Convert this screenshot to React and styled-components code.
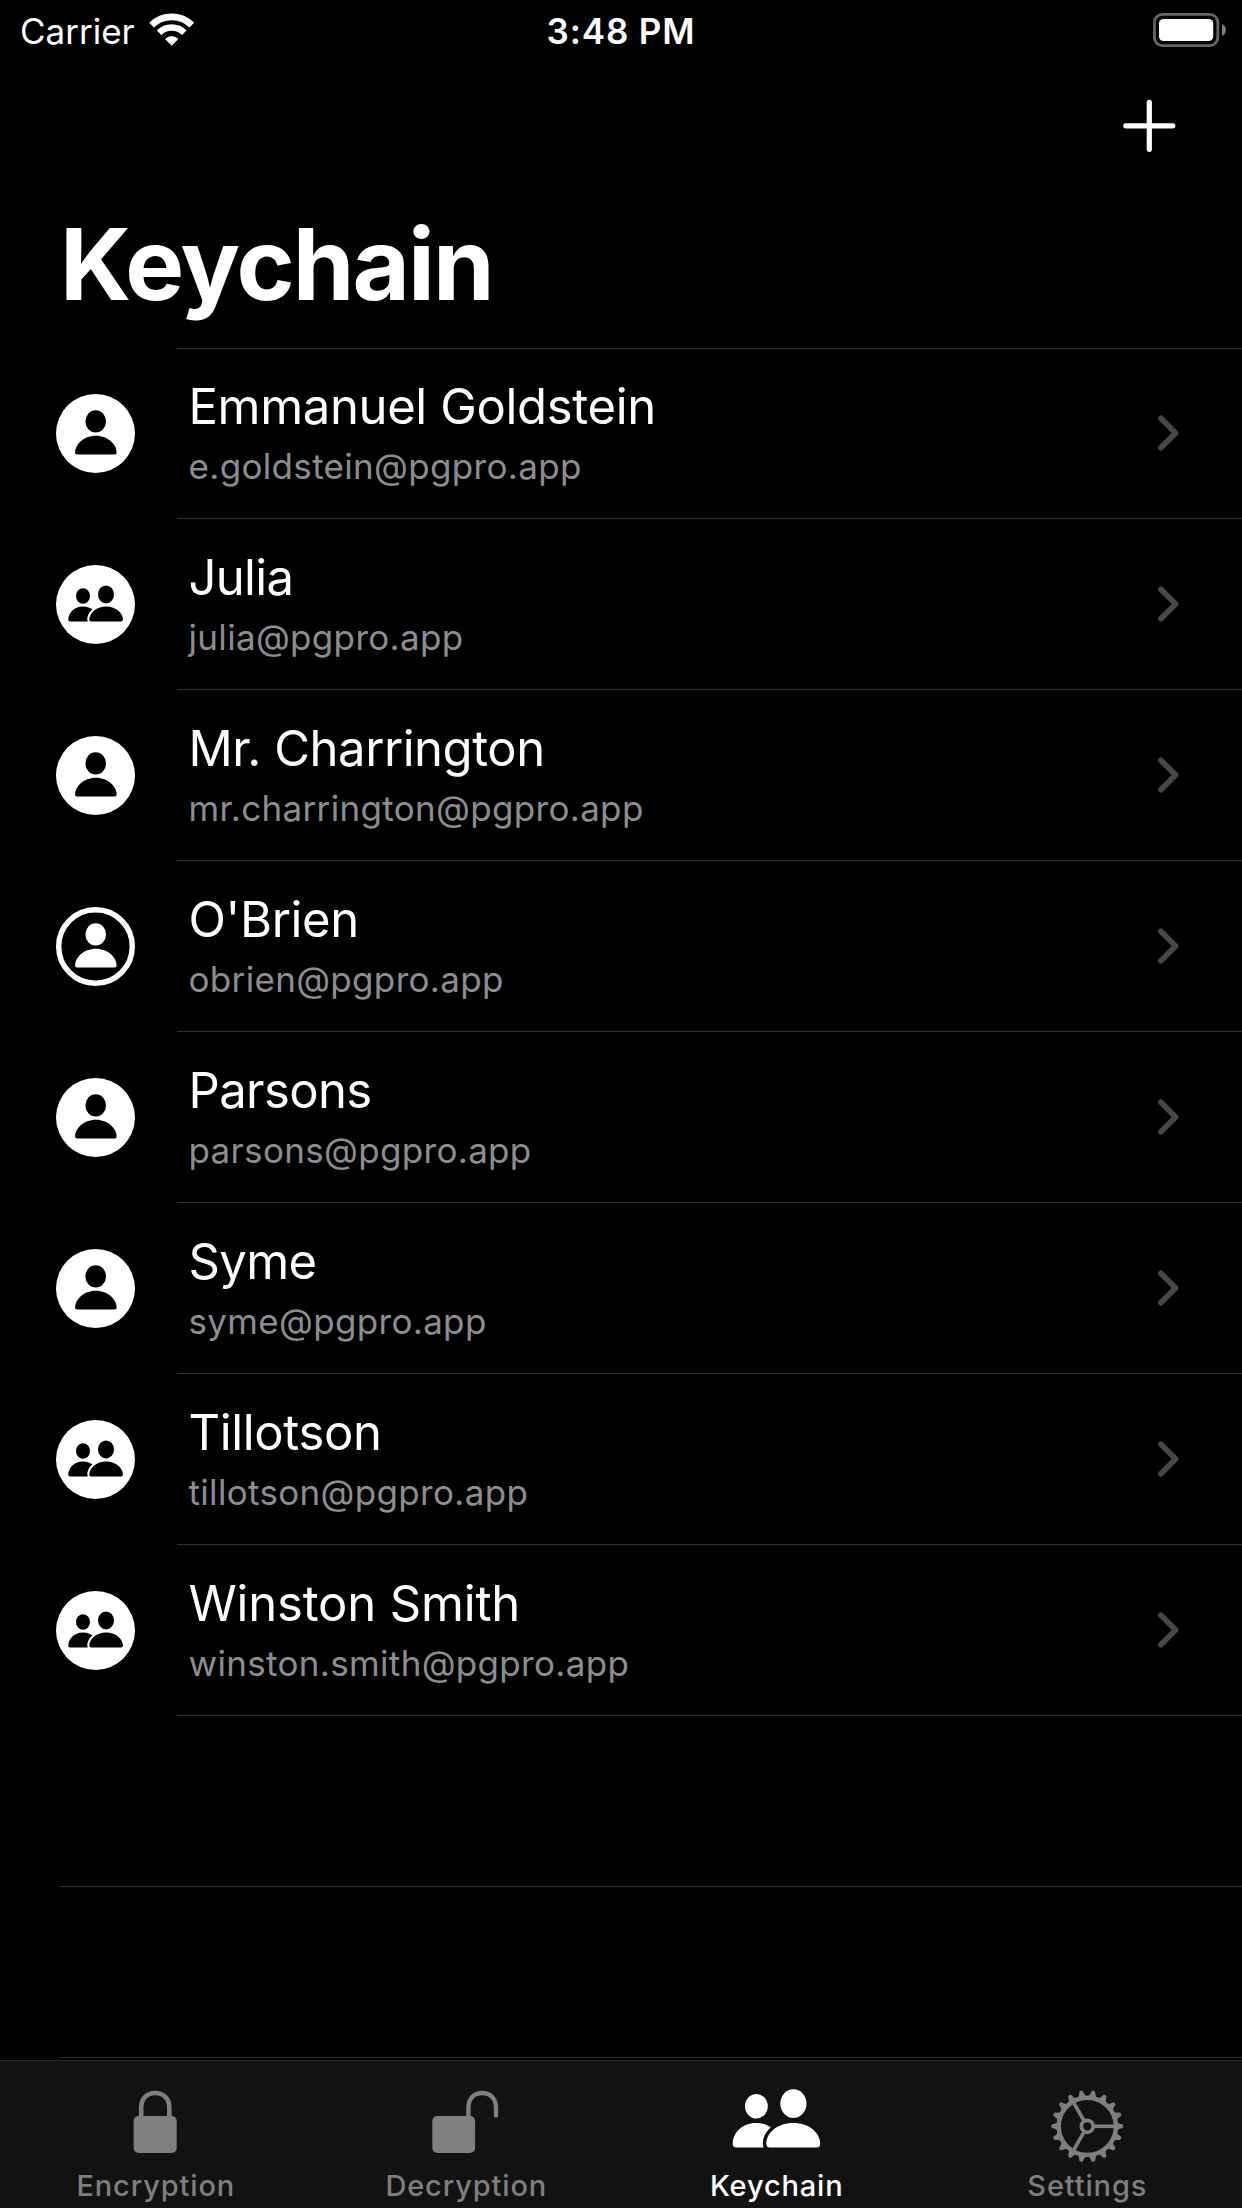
import React from "react";
import styled, { createGlobalStyle } from "styled-components";

const GlobalStyle = createGlobalStyle`
  body {
    margin: 0;
    background: #000;
    color: #fff;
    font-family: "Inter", "Liberation Sans", sans-serif;
  }
  *, *::before, *::after { box-sizing: border-box; }
  svg { display: block; flex: none; }
`;

const Screen = styled.div`
  width: 1242px;
  height: 2208px;
  display: flex;
  flex-direction: column;
  overflow: hidden;
  background: #000;
`;

const StatusBar = styled.header`
  flex: none;
  display: grid;
  grid-template-columns: 1fr auto 1fr;
  height: 60px;
  padding: 10px 15px 0 20px;
  font-size: 35px;
  line-height: 42px;
`;

const Carrier = styled.div`
  display: flex;
  align-items: flex-start;
  gap: 14.6px;

  svg { margin-top: 3px; }
`;

const Clock = styled.div`
  padding-right: 5px;
  font-weight: 600;
  letter-spacing: 0.85px;
`;

const BatteryArea = styled.div`
  display: flex;
  justify-content: flex-end;
  padding-top: 3px;
`;

const NavBar = styled.nav`
  flex: none;
  display: flex;
  align-items: center;
  justify-content: flex-end;
  height: 132px;
  padding-right: 66px;
`;

const IconButton = styled.button`
  padding: 0;
  border: 0;
  background: none;
  color: #fff;
`;

const Title = styled.h1`
  flex: none;
  margin: 12px 0 24px 60px;
  font-size: 99px;
  font-weight: 700;
  line-height: 120px;
  letter-spacing: -1.93px;
`;

const List = styled.ul`
  flex: 1;
  min-height: 0;
  margin: 0;
  padding: 0;
  overflow: hidden;
  list-style: none;
`;

const TopRule = styled.li`
  height: 1px;
  margin-left: 177px;
  background: #313134;
`;

const Row = styled.li`
  display: flex;
  height: ${(p) => (p.$first ? 170 : 171)}px;
`;

const AvatarCell = styled.div`
  flex: none;
  display: flex;
  align-items: flex-end;
  width: 177px;
  padding: 0 0 46px 56px;
`;

const RowBody = styled.div`
  flex: 1;
  display: flex;
  align-items: flex-end;
  justify-content: space-between;
  padding: 0 62px 31px 11.5px;
  border-bottom: 1px solid #313134;

  & > svg { margin-bottom: 35px; }
`;

const Labels = styled.div`
  display: flex;
  flex-direction: column;
  gap: 9px;
`;

const Name = styled.div`
  font-size: 49px;
  line-height: 59px;
  letter-spacing: ${(p) => p.$tracking ?? -0.35}px;
`;

const Email = styled.div`
  color: #8d8d92;
  font-size: 35px;
  line-height: 42px;
  letter-spacing: 0.33px;
`;

const EmptyRow = styled.li`
  height: 171px;
  margin-left: 60px;
  border-bottom: 1px solid #313134;
`;

const TabBar = styled.footer`
  flex: none;
  display: grid;
  grid-template-columns: repeat(4, 1fr);
  height: 148px;
  border-top: 1px solid #292929;
  background: #121212;
`;

const Tab = styled.div`
  display: flex;
  flex-direction: column;
  align-items: center;
  padding-top: 19px;
  color: ${(p) => (p.$active ? "#fff" : "#7f7f7f")};
`;

const TabLabel = styled.span`
  padding-left: 1px;
  font-size: 29px;
  font-weight: 500;
  line-height: 35px;
  letter-spacing: 0.85px;
`;

const BODY =
  "M19.1 58.2C19.1 51 27.4 41.8 39.8 41.8S60.6 51 60.6 58.2C60.6 59.8 60 60.4 58.5 60.4H21.2C19.7 60.4 19.1 59.8 19.1 58.2Z";

function Wifi() {
  return (
    <svg width="46" height="34" viewBox="0 0 46 34" fill="none" stroke="#fff">
      <path d="M2.6 12.1A28.7 28.7 0 0 1 42.8 12.1" strokeWidth="6.8" />
      <path d="M10 19.6A18.2 18.2 0 0 1 35.4 19.6" strokeWidth="6.4" />
      <path d="M22.7 32.2L16.6 26.1A8.8 8.8 0 0 1 28.8 26.1Z" fill="#fff" strokeWidth="1" strokeLinejoin="round" />
    </svg>
  );
}

function Battery() {
  return (
    <svg width="74" height="34" viewBox="0 0 74 34">
      <rect x="1.4" y="1.4" width="63.4" height="31.2" rx="8" fill="none" stroke="#666" strokeWidth="2.8" />
      <rect x="6" y="6" width="54.2" height="22" rx="4.5" fill="#fff" />
      <path d="M69 11C71.3 12 72.8 14.3 72.8 17S71.3 22 69 23Z" fill="#808080" />
    </svg>
  );
}

function Plus() {
  return (
    <svg width="54" height="54" viewBox="0 0 54 54" stroke="currentColor" strokeWidth="5.2" strokeLinecap="round">
      <path d="M27.3 3.3V50.3M3.8 26.8H50.8" />
    </svg>
  );
}

function Person({ fill }) {
  return (
    <g fill={fill}>
      <ellipse cx="39.7" cy="27.4" rx="10.3" ry="11.2" />
      <path d={BODY} />
    </g>
  );
}

function Pair() {
  return (
    <g fill="#000">
      <ellipse cx="27" cy="31" rx="7" ry="7.7" />
      <path d="M12.3 54.3C12.3 48.5 17.5 41.4 27 41.4S41.7 48.5 41.7 54.3V56.4H14.2C12.8 56.4 12.3 55.8 12.3 54.3Z" />
      <ellipse cx="50" cy="29.4" rx="8" ry="9" />
      <path
        d="M33.3 54.3C33.3 48.5 39.8 41.4 50.1 41.4S66.9 48.5 66.9 54.3C66.9 55.8 66.4 56.4 65 56.4H35.2C33.8 56.4 33.3 55.8 33.3 54.3Z"
        stroke="#fff"
        strokeWidth="4"
        paintOrder="stroke"
      />
    </g>
  );
}

function Avatar({ kind }) {
  return (
    <svg width="79" height="79" viewBox="0 0 79 79">
      {kind === "public" ? (
        <circle cx="39.5" cy="39.5" r="36.8" fill="none" stroke="#fff" strokeWidth="5.4" />
      ) : (
        <circle cx="39.5" cy="39.5" r="39.5" fill="#fff" />
      )}
      {kind === "pair" ? <Pair /> : <Person fill={kind === "public" ? "#fff" : "#000"} />}
    </svg>
  );
}

function Chevron() {
  return (
    <svg width="24" height="38" viewBox="0 0 24 38" fill="none" stroke="#48484b" strokeWidth="5.6" strokeLinecap="round" strokeLinejoin="round">
      <path d="M4.9 4.2L19.6 19L4.9 33.8" />
    </svg>
  );
}

function TabIcon({ children }) {
  return (
    <svg width="90" height="88" viewBox="0 0 90 88">
      {children}
    </svg>
  );
}

function Lock() {
  return (
    <TabIcon>
      <rect x="23.6" y="36" width="43.1" height="37" rx="5" fill="currentColor" />
      <path d="M31.2 38V27.5C31.2 18.7 37 13 45.2 13S59.3 18.7 59.3 27.5V38" fill="none" stroke="currentColor" strokeWidth="4.6" />
    </TabIcon>
  );
}

function Unlock() {
  return (
    <TabIcon>
      <rect x="11.3" y="36" width="42.8" height="37" rx="5" fill="currentColor" />
      <path d="M47.4 38V27.5C47.4 18.7 53 13 61.2 13S75 18.7 75 27.5V35.4" fill="none" stroke="currentColor" strokeWidth="4.4" strokeLinecap="round" />
    </TabIcon>
  );
}

function People() {
  return (
    <TabIcon>
      <g fill="currentColor">
        <ellipse cx="25.4" cy="26.2" rx="11.4" ry="12.3" />
        <path d="M1.7 63.5C1.7 53.5 10.5 43 25.2 43S49 53.5 49 63.5V67.4H5.3C2.6 67.4 1.7 66.4 1.7 63.5Z" />
        <ellipse cx="62.4" cy="23.6" rx="13.1" ry="14.4" />
        <path
          d="M35.3 63.5C35.3 53.5 45.7 43 62.3 43S89.1 53.5 89.1 63.5C89.1 66.4 88.2 67.4 85.5 67.4H38.9C36.2 67.4 35.3 66.4 35.3 63.5Z"
          stroke="#121212"
          strokeWidth="7"
          paintOrder="stroke"
        />
      </g>
    </TabIcon>
  );
}

function Gear() {
  const teeth = Array.from({ length: 18 }, (_, i) => i * 20);
  return (
    <TabIcon>
      <g transform="translate(45.3 46.3)" fill="none" stroke="currentColor">
        <circle r="28.6" strokeWidth="4.4" />
        <circle r="6" strokeWidth="3.7" />
        {[0, 120, 240].map((a) => (
          <path key={a} d="M7 0H28" strokeWidth="3.6" transform={`rotate(${a})`} />
        ))}
        {teeth.map((a) => (
          <path
            key={a}
            d="M29.5 -4.4C31.3 -3 33 -2.4 34.8 -2C36.4 -1.4 36.4 1.4 34.8 2C33 2.4 31.3 3 29.5 4.4Z"
            fill="currentColor"
            stroke="none"
            transform={`rotate(${a})`}
          />
        ))}
      </g>
    </TabIcon>
  );
}

const contacts = [
  { name: "Emmanuel Goldstein", email: "e.goldstein@pgpro.app", kind: "single" },
  { name: "Julia", email: "julia@pgpro.app", kind: "pair", tracking: -0.7 },
  { name: "Mr. Charrington", email: "mr.charrington@pgpro.app", kind: "single", tracking: -0.45 },
  { name: "O'Brien", email: "obrien@pgpro.app", kind: "public" },
  { name: "Parsons", email: "parsons@pgpro.app", kind: "single", tracking: -0.6 },
  { name: "Syme", email: "syme@pgpro.app", kind: "single", tracking: -0.6 },
  { name: "Tillotson", email: "tillotson@pgpro.app", kind: "pair" },
  { name: "Winston Smith", email: "winston.smith@pgpro.app", kind: "pair", tracking: -0.18 },
];

const tabs = [
  { label: "Encryption", Icon: Lock },
  { label: "Decryption", Icon: Unlock },
  { label: "Keychain", Icon: People, active: true },
  { label: "Settings", Icon: Gear },
];

export default function App() {
  return (
    <Screen>
      <GlobalStyle />
      <StatusBar>
        <Carrier>
          Carrier
          <Wifi />
        </Carrier>
        <Clock>3:48 PM</Clock>
        <BatteryArea>
          <Battery />
        </BatteryArea>
      </StatusBar>
      <NavBar>
        <IconButton aria-label="Add">
          <Plus />
        </IconButton>
      </NavBar>
      <Title>Keychain</Title>
      <List>
        <TopRule />
        {contacts.map((c, i) => (
          <Row key={c.email} $first={i === 0}>
            <AvatarCell>
              <Avatar kind={c.kind} />
            </AvatarCell>
            <RowBody>
              <Labels>
                <Name $tracking={c.tracking}>{c.name}</Name>
                <Email>{c.email}</Email>
              </Labels>
              <Chevron />
            </RowBody>
          </Row>
        ))}
        <EmptyRow />
        <EmptyRow />
      </List>
      <TabBar>
        {tabs.map(({ label, Icon, active }) => (
          <Tab key={label} $active={active}>
            <Icon />
            <TabLabel>{label}</TabLabel>
          </Tab>
        ))}
      </TabBar>
    </Screen>
  );
}
